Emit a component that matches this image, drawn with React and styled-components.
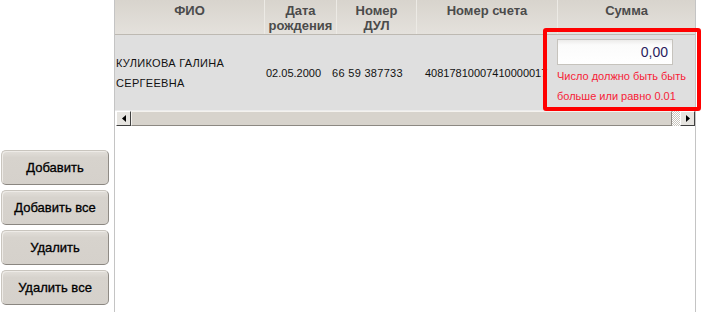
import React from "react";
import styled, { createGlobalStyle } from "styled-components";

const GlobalStyle = createGlobalStyle`
  html, body { margin: 0; padding: 0; background: #fff; }
  body { font-family: "Liberation Sans", Arial, sans-serif; }
  * { box-sizing: border-box; }
`;

const HEAD_COLS = "150px 72px 80px 141px 137px";
const DATA_COLS = "143px 71px 77px 151px 138px";

const Page = styled.div`
  position: relative;
  display: flex;
  width: 718px;
  height: 312px;
  overflow: hidden;
`;

const Sidebar = styled.div`
  width: 114px;
  flex: none;
  display: flex;
  flex-direction: column;
  gap: 5px;
  padding: 150px 0 0 1px;
`;

const ActionButton = styled.button`
  width: 108px;
  height: 35px;
  border-radius: 5px;
  border: 1px solid #c9c5be;
  border-right-color: #8f8b85;
  border-bottom-color: #8a8680;
  background: linear-gradient(to bottom, #e2dfda 0%, #d7d3cd 20%, #d5d1cb 100%);
  box-shadow: inset 1px 1px 0 #eeebe7;
  font-family: "Liberation Sans", Arial, sans-serif;
  font-size: 13px;
  color: #000;
  -webkit-text-stroke: 0.3px #000;
  padding: 0;
  cursor: pointer;
`;

const GridPanel = styled.div`
  width: 582px;
  flex: none;
  border-left: 1px solid #c4c4c4;
  border-right: 1px solid #c4c4c4;
  display: flex;
  flex-direction: column;
`;

const HeaderRow = styled.div`
  display: grid;
  grid-template-columns: ${HEAD_COLS};
  height: 35px;
  border-bottom: 1px solid #bdb9b2;
  background: linear-gradient(to bottom, #d8d4cd, #e4e1dc);
`;

const HeaderCell = styled.div`
  border-right: ${(p) => (p.$last ? "none" : "1px solid #eceae5")};
  text-align: center;
  font-weight: bold;
  font-size: 13px;
  line-height: 15px;
  color: #4b4b4b;
  padding-top: 3px;
  overflow: hidden;
  white-space: nowrap;
`;

const DataRow = styled.div`
  display: grid;
  grid-template-columns: ${DATA_COLS};
  height: 76px;
  align-items: center;
  background: #dfdfdf;
  border-bottom: 1px solid #ececec;
`;

const DataCell = styled.div`
  font-size: 11px;
  line-height: 20px;
  color: #111;
  text-align: ${(p) => p.$align || "center"};
  padding-left: ${(p) => p.$indent || 0}px;
  letter-spacing: ${(p) => (p.$wide ? "0.3px" : "0")};
  white-space: nowrap;
  overflow: hidden;
`;

const SumCell = styled.div`
  display: flex;
  flex-direction: column;
  align-items: flex-start;
`;

const SumInput = styled.div`
  width: 116px;
  height: 26px;
  border: 1px solid #c6c3bd;
  background: linear-gradient(to bottom, #ecebea 0px, #fbfbfb 5px, #fff 100%);
  font-size: 14px;
  line-height: 24px;
  color: #2a1c5e;
  text-align: right;
  padding-right: 4px;
`;

const ErrorText = styled.div`
  margin-top: 1px;
  font-size: 11px;
  line-height: 20px;
  color: #f72238;
  white-space: nowrap;
`;

const Scrollbar = styled.div`
  display: flex;
  height: 15px;
  margin-left: 1px;
`;

const ScrollButton = styled.div`
  width: 15px;
  flex: none;
  background: #e6e4e0;
  border: 1px solid;
  border-color: #fff #404040 #404040 #fff;
  display: flex;
  align-items: center;
  justify-content: center;
`;

const Thumb = styled.div`
  flex: 1;
  background: #d7d3cc;
  border: 1px solid;
  border-color: #f4f2ee #8c8882 #8c8882 #f4f2ee;
`;

const Track = styled.div`
  width: 8px;
  flex: none;
  background: repeating-conic-gradient(#ffffff 0 25%, #c8c4bc 0 50%) 0 0 / 2px 2px;
`;

const Arrow = ({ dir }) => (
  <svg width="4" height="7" viewBox="0 0 4 7">
    {dir === "left" ? (
      <polygon points="4,0 4,7 0,3.5" fill="#000" />
    ) : (
      <polygon points="0,0 0,7 4,3.5" fill="#000" />
    )}
  </svg>
);

const Highlight = styled.div`
  position: absolute;
  left: 543px;
  top: 28px;
  width: 158px;
  height: 83px;
  border: 4px solid #ff0000;
  border-radius: 3px;
  pointer-events: none;
`;

export default function App() {
  return (
    <>
      <GlobalStyle />
      <Page>
        <Sidebar>
          <ActionButton>Добавить</ActionButton>
          <ActionButton>Добавить все</ActionButton>
          <ActionButton>Удалить</ActionButton>
          <ActionButton>Удалить все</ActionButton>
        </Sidebar>
        <GridPanel>
          <HeaderRow>
            <HeaderCell>ФИО</HeaderCell>
            <HeaderCell>
              Дата
              <br />
              рождения
            </HeaderCell>
            <HeaderCell>
              Номер
              <br />
              ДУЛ
            </HeaderCell>
            <HeaderCell>Номер счета</HeaderCell>
            <HeaderCell $last>Сумма</HeaderCell>
          </HeaderRow>
          <DataRow>
            <DataCell $align="left" $indent={1} $wide>
              КУЛИКОВА ГАЛИНА
              <br />
              СЕРГЕЕВНА
            </DataCell>
            <DataCell>02.05.2000</DataCell>
            <DataCell $wide>66 59 387733</DataCell>
            <DataCell $align="left" $indent={19}>
              40817810007410000017
            </DataCell>
            <SumCell>
              <SumInput>0,00</SumInput>
              <ErrorText>
                Число должно быть быть
                <br />
                больше или равно 0.01
              </ErrorText>
            </SumCell>
          </DataRow>
          <Scrollbar>
            <ScrollButton>
              <Arrow dir="left" />
            </ScrollButton>
            <Thumb />
            <Track />
            <ScrollButton>
              <Arrow dir="right" />
            </ScrollButton>
          </Scrollbar>
        </GridPanel>
        <Highlight />
      </Page>
    </>
  );
}
